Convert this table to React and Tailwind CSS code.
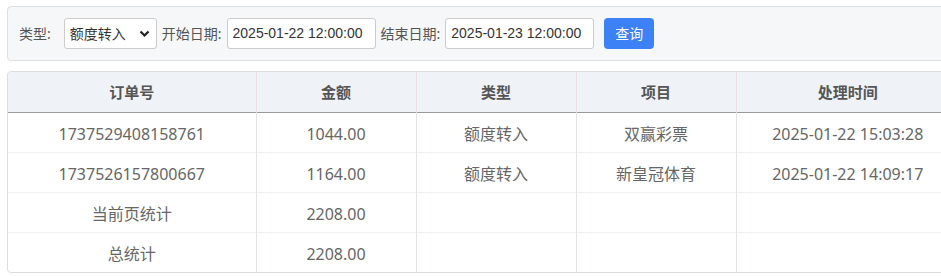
import React from 'react';

const rows = [
  ['1737529408158761', '1044.00', '额度转入', '双赢彩票', '2025-01-22 15:03:28'],
  ['1737526157800667', '1164.00', '额度转入', '新皇冠体育', '2025-01-22 14:09:17'],
  ['当前页统计', '2208.00', '', '', ''],
  ['总统计', '2208.00', '', '', ''],
];

const font = { fontFamily: '"Noto Sans", "Noto Sans CJK SC", sans-serif' };

export default function App() {
  return (
    <div className="w-[941px] h-[276px] overflow-hidden bg-white pt-[6px] pl-[7px]" style={font}>
      {/* Filter bar */}
      <div className="w-[953px] h-[55px] flex items-center pl-[11px] bg-[#f5f7f9] border border-[#dcdfe3] rounded-[4px] text-[14px] text-[#555]">
        <span className="mr-[13px]">类型:</span>
        <div className="relative w-[93px] h-[31px] bg-white border border-[#ccc] rounded-[3px] flex items-center pl-[5px] text-[#333]">
          <span>额度转入</span>
          <svg className="absolute right-[6px] top-[11px]" width="11" height="8" viewBox="0 0 11 8">
            <path d="M1.5 1.5 L5.5 5.5 L9.5 1.5" fill="none" stroke="#222" strokeWidth="2.2" />
          </svg>
        </div>
        <span className="ml-[5px] mr-[5px]">开始日期:</span>
        <div className="w-[149px] h-[31px] bg-white border border-[#ccc] rounded-[3px] flex items-center pl-[5px] text-[#333] text-[14px]" style={{ fontFamily: '"Liberation Sans", sans-serif' }}>
          2025-01-22 12:00:00
        </div>
        <span className="ml-[5px] mr-[5px]">结束日期:</span>
        <div className="w-[149px] h-[31px] bg-white border border-[#ccc] rounded-[3px] flex items-center pl-[5px] text-[#333] text-[14px]" style={{ fontFamily: '"Liberation Sans", sans-serif' }}>
          2025-01-23 12:00:00
        </div>
        <button className="ml-[10px] w-[50px] h-[31px] bg-[#3c82f6] text-white rounded-[4px] text-[14px]">查询</button>
      </div>

      {/* Table */}
      <div className="mt-[10px] w-[953px] border border-[#dcdcdc] rounded-[4px] overflow-hidden">
        <table className="w-full table-fixed border-collapse">
          <colgroup>
            <col className="w-[248px]" />
            <col className="w-[160px]" />
            <col className="w-[160px]" />
            <col className="w-[160px]" />
            <col />
          </colgroup>
          <thead>
            <tr className="h-[40px] bg-[#eff2f6] border-b border-[#9a9a9a]">
              {['订单号', '金额', '类型', '项目', '处理时间'].map((h, i) => (
                <th key={i} className={`text-[15px] font-semibold text-[#555] text-center ${i > 0 ? 'border-l border-[#ecdfe3]' : ''}`}>
                  {h}
                </th>
              ))}
            </tr>
          </thead>
          <tbody>
            {rows.map((r, ri) => (
              <tr key={ri} className={`h-[40px] ${ri < rows.length - 1 ? 'border-b border-[#efefef]' : ''}`}>
                {r.map((c, ci) => (
                  <td key={ci} className={`pt-[3px] text-[16px] text-[#666] text-center ${ci > 0 ? 'border-l border-[#ecdfe3]' : ''}`}>
                    {c}
                  </td>
                ))}
              </tr>
            ))}
          </tbody>
        </table>
      </div>
    </div>
  );
}
